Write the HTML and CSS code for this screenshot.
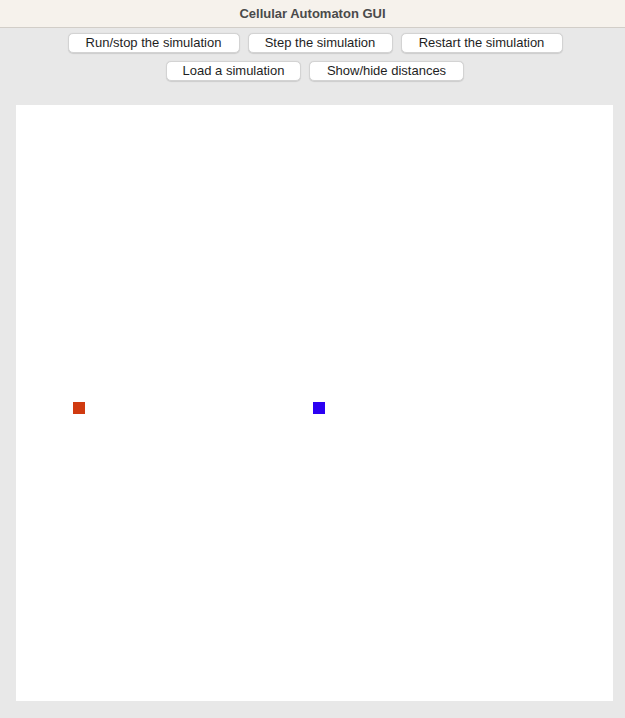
FILE: index.html
```html
<!DOCTYPE html>
<html>
<head>
<meta charset="utf-8">
<link rel="stylesheet" href="styles.css">
</head>
<body>
<div class="titlebar">Cellular Automaton GUI</div>
<div class="controls">
  <div class="row">
    <button class="btn w1">Run/stop the simulation</button>
    <button class="btn w2">Step the simulation</button>
    <button class="btn w3">Restart the simulation</button>
  </div>
  <div class="row">
    <button class="btn w4">Load a simulation</button>
    <button class="btn w5">Show/hide distances</button>
  </div>
</div>
<div class="canvas">
  <div class="cell red" style="left:57px;top:297px"></div>
  <div class="cell blue" style="left:297px;top:297px"></div>
</div>
</body>
</html>
```
FILE: styles.css
```css
html, body {
  margin: 0;
  padding: 0;
}
body {
  width: 625px;
  height: 718px;
  background: #e8e8e8;
  font-family: "Liberation Sans", Arial, sans-serif;
  overflow: hidden;
}
.titlebar {
  height: 27px;
  line-height: 27px;
  background: #f6f2ec;
  border-bottom: 1px solid #d2cec8;
  text-align: center;
  font-weight: bold;
  font-size: 13px;
  color: #4a4a4a;
}
.controls {
  display: flex;
  flex-direction: column;
  gap: 8px;
  padding: 5px 0 0 5px;
}
.row {
  display: flex;
  justify-content: center;
  gap: 8px;
}
.btn {
  height: 20px;
  padding: 0;
  background: #ffffff;
  border: 1px solid #d3d3d3;
  border-radius: 5px;
  box-shadow: 0 0.5px 1px rgba(0,0,0,0.12);
  font-family: "Liberation Sans", Arial, sans-serif;
  font-size: 13px;
  color: #1e1e1e;
  line-height: 18px;
}
.w1 { width: 172px; }
.w2 { width: 145px; }
.w3 { width: 162px; }
.w4 { width: 135px; }
.w5 { width: 155px; }
.canvas {
  position: relative;
  width: 597px;
  height: 596px;
  margin: 24px 0 0 16px;
  background: #ffffff;
}
.cell {
  position: absolute;
  width: 12px;
  height: 12px;
}
.red { background: #d03a10; }
.blue { background: #2b00f3; }
```
